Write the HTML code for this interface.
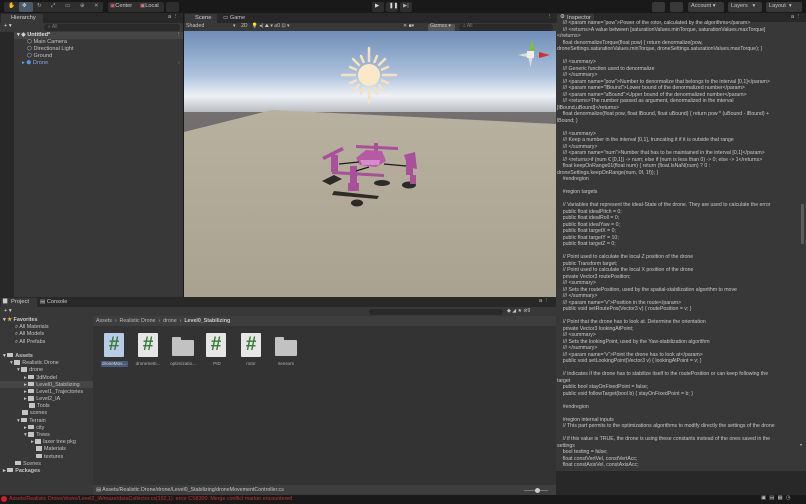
<!DOCTYPE html>
<html><head><meta charset="utf-8"><style>
*{margin:0;padding:0;box-sizing:border-box}
body{width:806px;height:504px;overflow:hidden;background:#191919;font-family:"Liberation Sans",sans-serif;color:#c4c4c4;position:relative}
.a{position:absolute}
.btn{position:absolute;background:#383838;border-radius:2px;height:10px}
.t{font-size:5.6px;white-space:nowrap;position:absolute;line-height:7px}
.tab{position:absolute;background:#383838;height:9px;font-size:5.8px;line-height:9px;padding-left:10px;color:#d0d0d0}
#insp div{height:6.5px;line-height:6.5px;font-size:5.2px;white-space:pre;color:#c8c8c8}
.tree div{height:7.2px;line-height:7.2px;font-size:5.4px;white-space:nowrap;position:relative}
.fold{display:inline-block;width:6px;height:4.5px;background:#c4c4c4;margin-right:2px;vertical-align:-0.5px;border-radius:0.5px}
.file{position:absolute;width:20px;height:24px;background:#e6e6e6;border-radius:1px;color:#3a7a3a;font-size:19px;font-weight:bold;text-align:center;line-height:24px}
.fd{position:absolute;width:22px;height:16px;background:#c2c2c2;border-radius:1px}
.fd:before{content:"";position:absolute;left:0;top:-3px;width:9px;height:4px;background:#c2c2c2;border-radius:1px 1px 0 0}
.lbl{position:absolute;font-size:4.6px;color:#b0b0b0;width:34px;text-align:center;white-space:nowrap;overflow:hidden}
</style></head><body>
<!-- toolbar -->
<div class="btn" style="left:4px;top:2px;width:99px;background:#2e2e2e"></div>
<div class="a" style="left:19px;top:2px;width:14px;height:10px;background:#4a5a6a;border-radius:2px"></div>
<div class="t" style="left:8px;top:3px;color:#aaa">✋</div>
<div class="t" style="left:22px;top:3px;color:#ddd">✥</div>
<div class="t" style="left:37px;top:3px;color:#aaa">↻</div>
<div class="t" style="left:51px;top:3px;color:#aaa">⤢</div>
<div class="t" style="left:65px;top:3px;color:#aaa">▭</div>
<div class="t" style="left:80px;top:3px;color:#aaa">⊕</div>
<div class="t" style="left:94px;top:3px;color:#aaa">✕</div>
<div class="btn" style="left:108px;top:2px;width:56px;background:#2e2e2e"></div>
<div class="t" style="left:110px;top:3px;color:#d06060">▣<span style="color:#ccc">Center</span></div>
<div class="t" style="left:140px;top:3px;color:#d08080">▣<span style="color:#ccc">Local</span></div>
<div class="btn" style="left:166px;top:2px;width:13px;background:#2e2e2e"></div>
<div class="btn" style="left:372px;top:2px;width:12px;background:#2e2e2e"></div>
<div class="t" style="left:375px;top:3px;color:#ddd">▶</div>
<div class="btn" style="left:386px;top:2px;width:12px;background:#2e2e2e"></div>
<div class="t" style="left:389px;top:3px;color:#ddd">❚❚</div>
<div class="btn" style="left:400px;top:2px;width:12px;background:#2e2e2e"></div>
<div class="t" style="left:403px;top:3px;color:#aaa">▶|</div>
<div class="btn" style="left:652px;top:2px;width:13px"></div>
<div class="btn" style="left:670px;top:2px;width:13px"></div>
<div class="btn" style="left:688px;top:2px;width:36px"></div><div class="t" style="left:691px;top:3px">Account ▾</div>
<div class="btn" style="left:728px;top:2px;width:34px"></div><div class="t" style="left:731px;top:3px">Layers &nbsp;&nbsp;▾</div>
<div class="btn" style="left:766px;top:2px;width:36px"></div><div class="t" style="left:769px;top:3px">Layout &nbsp;▾</div>

<!-- hierarchy -->
<div class="a" style="left:0;top:13px;width:183px;height:284px;background:#282828"></div>
<div class="tab" style="left:1px;top:14px;width:42px">Hierarchy</div>
<div class="t" style="left:168px;top:14px">a ⋮</div>
<div class="a" style="left:0;top:23px;width:183px;height:9px;background:#383838"></div>
<div class="t" style="left:4px;top:23px;color:#ddd">+ ▾</div>
<div class="a" style="left:44px;top:24px;width:136px;height:7px;background:#2a2a2a;border-radius:3px"></div>
<div class="t" style="left:48px;top:23.5px;font-size:5px;color:#777">⌕ All</div>
<div class="a" style="left:14px;top:32px;width:169px;height:265px;background:#383838"></div>
<div class="a" style="left:14px;top:32px;width:169px;height:7px;background:#454545"></div>
<div class="t" style="left:17px;top:31.5px;color:#ddd;font-weight:bold">▾ ◈ Untitled*</div>
<div class="t" style="left:176px;top:31.5px">⋮</div>
<div class="t" style="left:27px;top:38.5px">⬡ Main Camera</div>
<div class="t" style="left:27px;top:45.5px">⬡ Directional Light</div>
<div class="t" style="left:27px;top:52.5px">⬡ Ground</div>
<div class="t" style="left:22px;top:59.5px;color:#7ca8e0">▸ <span style="color:#4aa0e0">⬢</span> Drone</div>
<div class="t" style="left:178px;top:59.5px;color:#888">›</div>

<!-- scene tabs -->
<div class="a" style="left:184px;top:13px;width:372px;height:18px;background:#282828"></div>
<div class="tab" style="left:185px;top:14px;width:32px">Scene</div>
<div class="t" style="left:223px;top:15px">▭ Game</div>
<div class="t" style="left:547px;top:14px">⋮</div>
<div class="a" style="left:184px;top:23px;width:372px;height:8px;background:#383838"></div>
<div class="t" style="left:186px;top:23px;font-size:5.3px">Shaded</div>
<div class="t" style="left:233px;top:23px;font-size:5px">▾ &nbsp;&nbsp;&nbsp;2D &nbsp;&nbsp;💡 ◂) ⛰ ▾ ⌀0 ⊡ ▾</div>
<div class="t" style="left:403px;top:23px;font-size:5px">✕ ■▾</div>
<div class="a" style="left:428px;top:23.5px;width:27px;height:7px;background:#555;border-radius:1px"></div>
<div class="t" style="left:430px;top:23px;font-size:5px">Gizmos ▾</div>
<div class="a" style="left:459px;top:23.5px;width:94px;height:7px;background:#2a2a2a;border-radius:3px"></div>
<div class="t" style="left:463px;top:23px;font-size:5px;color:#777">⌕ All</div>

<!-- scene view -->
<svg class="a" style="left:184px;top:31px" width="372" height="266" viewBox="0 0 372 266">
<defs><linearGradient id="sky" x1="0" y1="0" x2="0" y2="1">
<stop offset="0" stop-color="#6f8db8"/><stop offset="0.55" stop-color="#aec3dc"/><stop offset="0.8" stop-color="#eef2f6"/><stop offset="1" stop-color="#b9bcc0"/></linearGradient>
<linearGradient id="gnd" x1="0" y1="0" x2="0" y2="1"><stop offset="0" stop-color="#757070"/><stop offset="1" stop-color="#5f5b59"/></linearGradient>
<linearGradient id="pl" x1="0" y1="0" x2="0" y2="1"><stop offset="0" stop-color="#b9b19f"/><stop offset="1" stop-color="#a9a290"/></linearGradient></defs>
<rect width="372" height="81" fill="url(#sky)"/>
<rect y="81" width="372" height="185" fill="url(#gnd)"/>
<polygon points="0,101 88,79 372,93 372,266 0,266" fill="url(#pl)"/>
<g stroke="#f4e2c0" stroke-width="2.5" stroke-linecap="round" transform="translate(185,44)">
<line x1="0" y1="-14" x2="0" y2="-27"/><line x1="0" y1="14" x2="0" y2="27"/><line x1="-14" y1="0" x2="-27" y2="0"/><line x1="14" y1="0" x2="27" y2="0"/>
<line x1="10" y1="-10" x2="16" y2="-16"/><line x1="-10" y1="-10" x2="-16" y2="-16"/><line x1="10" y1="10" x2="16" y2="16"/><line x1="-10" y1="10" x2="-16" y2="16"/>
<line x1="5.5" y1="-13" x2="8" y2="-19"/><line x1="-5.5" y1="-13" x2="-8" y2="-19"/><line x1="5.5" y1="13" x2="8" y2="19"/><line x1="-5.5" y1="13" x2="-8" y2="19"/>
<line x1="13" y1="-5.5" x2="19" y2="-8"/><line x1="-13" y1="-5.5" x2="-19" y2="-8"/><line x1="13" y1="5.5" x2="19" y2="8"/><line x1="-13" y1="5.5" x2="-19" y2="8"/>
</g>
<circle cx="185" cy="44" r="11" fill="#fbe8c6"/>
<!-- gizmo -->
<polygon points="348,9 345,20 351,20" fill="#7ec03a"/>
<polygon points="366,24 355,21 355,27" fill="#d03030"/>
<rect x="343" y="20" width="7" height="7" fill="#eee"/>
<polygon points="334,24 343,22 343,26" fill="#ddd"/><polygon points="346.5,36 344.5,27 348.5,27" fill="#ddd"/>
<!-- drone shadow -->
<g fill="#151515" opacity="0.85">
<polygon points="138,150 150,144 158,148 146,154"/><polygon points="150,160 195,165 193,168 148,164"/>
<ellipse cx="198" cy="152" rx="8" ry="3"/><ellipse cx="173" cy="172" rx="6" ry="3.5"/><ellipse cx="225" cy="154" rx="7" ry="3.5"/>
</g>
<g fill="#a8509a">
<polygon points="138,126 158,116 160,119 140,129"/>
<polygon points="172,114 214,116 214,119 172,117"/>
<rect x="147" y="124" width="7" height="17"/><rect x="190" y="112" width="4" height="12"/>
<polygon points="172,127 182,119 198,120 202,130 192,136 176,134" fill="#b65aa2"/>
<polygon points="176,129 196,129 195,134 178,134" fill="#d88ccc"/>
<rect x="166" y="135" width="7" height="18"/><polygon points="148,140 200,143 200,146 148,143"/>
<rect x="164" y="152" width="11" height="8"/>
<rect x="222" y="127" width="7" height="17"/><polygon points="220,124 231,121 233,138 224,136"/>
<rect x="226" y="144" width="6" height="9"/>
</g>
<g stroke="#1a1a1a" stroke-width="1.2"><line x1="155" y1="133" x2="175" y2="131"/><line x1="200" y1="133" x2="222" y2="135"/><line x1="185" y1="136" x2="172" y2="140"/></g>
</svg>

<!-- inspector -->
<div class="a" style="left:556px;top:13px;width:250px;height:491px;background:#282828"></div>
<div class="tab" style="left:557px;top:14px;width:37px">Inspector</div>
<div class="t" style="left:560px;top:14px;color:#ddd">⚙</div>
<div class="t" style="left:791px;top:14px">a ⋮</div>
<div class="a" style="left:556px;top:22px;width:250px;height:449px;background:#383838"></div>
<div class="a" style="left:801px;top:204px;width:3px;height:40px;background:#5a5a5a"></div>
<div class="t" style="left:800px;top:441px;font-size:4px">▾</div>
<div id="insp" class="a" style="left:557px;top:20px;width:244px;overflow:hidden;height:451px">
<div>    /// &lt;param name="pow"&gt;Power of the rotor, calculated by the algorithms&lt;/param&gt;</div>
<div>    /// &lt;returns&gt;A value between [saturationValues.minTorque, saturationValues.maxTorque]</div>
<div>&lt;/returns&gt;</div>
<div>    float denormalizeTorque(float pow) { return denormalize(pow,</div>
<div>droneSettings.saturationValues.minTorque, droneSettings.saturationValues.maxTorque); }</div>
<div> </div>
<div>    /// &lt;summary&gt;</div>
<div>    /// Generic function used to denormalize</div>
<div>    /// &lt;/summary&gt;</div>
<div>    /// &lt;param name="pow"&gt;Number to denormalize that belongs to the interval [0,1]&lt;/param&gt;</div>
<div>    /// &lt;param name="lBound"&gt;Lower bound of the denormalized number&lt;/param&gt;</div>
<div>    /// &lt;param name="uBound"&gt;Upper bound of the denormalized number&lt;/param&gt;</div>
<div>    /// &lt;returns&gt;The number passed as argument, denormalized in the interval</div>
<div>[lBound,uBound]&lt;/returns&gt;</div>
<div>    float denormalize(float pow, float lBound, float uBound) { return pow * (uBound - lBound) +</div>
<div>lBound; }</div>
<div> </div>
<div>    /// &lt;summary&gt;</div>
<div>    /// Keep a number in the interval [0,1], truncating it if it is outside that range</div>
<div>    /// &lt;/summary&gt;</div>
<div>    /// &lt;param name="num"&gt;Number that has to be maintained in the interval [0,1]&lt;/param&gt;</div>
<div>    /// &lt;returns&gt;if (num € [0,1]) -&gt; num; else if (num is less than 0) -&gt; 0; else -&gt; 1&lt;/returns&gt;</div>
<div>    float keepOnRange01(float num) { return (float.IsNaN(num) ? 0 :</div>
<div>droneSettings.keepOnRange(num, 0f, 1f)); }</div>
<div>    #endregion</div>
<div> </div>
<div>    #region targets</div>
<div> </div>
<div>    // Variables that represent the ideal-State of the drone. They are used to calculate the error</div>
<div>    public float idealPitch = 0;</div>
<div>    public float idealRoll = 0;</div>
<div>    public float idealYaw = 0;</div>
<div>    public float targetX = 0;</div>
<div>    public float targetY = 10;</div>
<div>    public float targetZ = 0;</div>
<div> </div>
<div>    // Point used to calculate the local Z position of the drone</div>
<div>    public Transform target;</div>
<div>    // Point used to calculate the local X position of the drone</div>
<div>    private Vector3 routePosition;</div>
<div>    /// &lt;summary&gt;</div>
<div>    /// Sets the routePosition, used by the spatial-stabilization algorithm to move</div>
<div>    /// &lt;/summary&gt;</div>
<div>    /// &lt;param name="v"&gt;Position in the route&lt;/param&gt;</div>
<div>    public void setRoutePos(Vector3 v) { routePosition = v; }</div>
<div> </div>
<div>    // Point that the drone has to look at. Determine the orientation</div>
<div>    private Vector3 lookingAtPoint;</div>
<div>    /// &lt;summary&gt;</div>
<div>    /// Sets the lookingPoint, used by the Yaw-stabilization algorithm</div>
<div>    /// &lt;/summary&gt;</div>
<div>    /// &lt;param name="v"&gt;Point the drone has to look at&lt;/param&gt;</div>
<div>    public void setLookingPoint(Vector3 v) { lookingAtPoint = v; }</div>
<div> </div>
<div>    // Indicates if the drone has to stabilize itself to the routePosition or can keep following the</div>
<div>target</div>
<div>    public bool stayOnFixedPoint = false;</div>
<div>    public void followTarget(bool b) { stayOnFixedPoint = b; }</div>
<div> </div>
<div>    #endregion</div>
<div> </div>
<div>    #region internal inputs</div>
<div>    // This part permits to the optimizations algorithms to modify directly the settings of the drone</div>
<div> </div>
<div>    // if this value is TRUE, the drone is using these constants instead of the ones saved in the</div>
<div>settings</div>
<div>    bool testing = false;</div>
<div>    float constVertVel, constVertAcc;</div>
<div>    float constAxisVel, constAxisAcc;</div>
</div>

<!-- project panel -->
<div class="a" style="left:0;top:297px;width:556px;height:198px;background:#282828"></div>
<div class="tab" style="left:1px;top:298px;width:36px">Project</div>
<div class="t" style="left:3px;top:298px;color:#ccc">▆</div>
<div class="t" style="left:40px;top:299px;color:#ccc">▤ Console</div>
<div class="t" style="left:539px;top:298px">a ⋮</div>
<div class="a" style="left:0;top:307px;width:556px;height:9px;background:#383838"></div>
<div class="t" style="left:4px;top:308px;color:#ddd">+ ▾</div>
<div class="a" style="left:369px;top:308.5px;width:134px;height:6px;background:#2a2a2a;border-radius:3px"></div>
<div class="t" style="left:507px;top:308px;font-size:5px">◆ ◢ ★ ⊘9</div>
<div class="a" style="left:0;top:316px;width:93px;height:179px;background:#383838"></div>
<div class="a" style="left:93px;top:316px;width:463px;height:10px;background:#3e3e3e"></div>
<div class="t" style="left:96px;top:317.5px;font-size:5.3px;color:#b8b8b8">Assets &nbsp;› &nbsp;Realistic Drone &nbsp;› &nbsp;drone &nbsp;› &nbsp;<b style="color:#ccc">Level0_Stabilizing</b></div>
<div class="a" style="left:93px;top:326px;width:463px;height:159px;background:#333333"></div>
<div class="a" style="left:93px;top:485px;width:463px;height:10px;background:#3e3e3e"></div>
<div class="t" style="left:96px;top:486.5px;font-size:5.3px">▤ Assets/Realistic Drone/drone/Level0_Stabilizing/droneMovementController.cs</div>
<div class="a" style="left:524px;top:489.5px;width:24px;height:1px;background:#777"></div>
<div class="a" style="left:535px;top:487.5px;width:5px;height:5px;background:#ccc;border-radius:50%"></div>
<div class="file" style="left:104px;top:333px;background:#b8cce8">#</div>
<div class="file" style="left:138px;top:333px">#</div>
<div class="fd" style="left:172px;top:340px"></div>
<div class="file" style="left:206px;top:333px">#</div>
<div class="file" style="left:241px;top:333px">#</div>
<div class="fd" style="left:275px;top:340px"></div>
<div class="a" style="left:101px;top:361px;width:27px;height:6px;background:#4a5a78;border-radius:1px"></div>
<div class="lbl" style="left:97px;top:361px;color:#ddd">droneMov...</div>
<div class="lbl" style="left:131px;top:361px">droneSetti...</div>
<div class="lbl" style="left:166px;top:361px">optimizatio...</div>
<div class="lbl" style="left:200px;top:361px">PID</div>
<div class="lbl" style="left:234px;top:361px">rotor</div>
<div class="lbl" style="left:269px;top:361px">sensors</div>
<div class="a" style="left:0;top:381px;width:93px;height:7px;background:#464646"></div>
<div class="tree a" style="left:3px;top:317px;width:92px">
<div style="font-weight:bold;color:#ccc">▾ <span style="color:#e0b040">★</span> Favorites</div>
<div style="padding-left:12px">⌕ All Materials</div>
<div style="padding-left:12px">⌕ All Models</div>
<div style="padding-left:12px">⌕ All Prefabs</div>
<div> </div>
<div style="font-weight:bold">▾ <span class="fold"></span>Assets</div>
<div style="padding-left:7px">▾ <span class="fold"></span>Realistic Drone</div>
<div style="padding-left:14px">▾ <span class="fold"></span>drone</div>
<div style="padding-left:21px">▸ <span class="fold"></span>3dModel</div>
<div style="padding-left:21px">▸ <span class="fold"></span>Level0_Stabilizing</div>
<div style="padding-left:21px">▸ <span class="fold"></span>Level1_Trajectories</div>
<div style="padding-left:21px">▸ <span class="fold"></span>Level2_IA</div>
<div style="padding-left:26px"><span class="fold"></span>Tools</div>
<div style="padding-left:19px"><span class="fold"></span>scenes</div>
<div style="padding-left:14px">▾ <span class="fold"></span>Terrain</div>
<div style="padding-left:21px">▸ <span class="fold"></span>city</div>
<div style="padding-left:21px">▾ <span class="fold"></span>Trees</div>
<div style="padding-left:28px">▸ <span class="fold"></span>laxer tree pkg</div>
<div style="padding-left:33px"><span class="fold"></span>Materials</div>
<div style="padding-left:33px"><span class="fold"></span>textures</div>
<div style="padding-left:12px"><span class="fold"></span>Scenes</div>
<div style="font-weight:bold">▸ <span class="fold"></span>Packages</div>
</div>

<!-- status bar -->
<div class="a" style="left:0;top:495px;width:806px;height:9px;background:#191919"></div>
<div class="a" style="left:1px;top:496px;width:6px;height:6px;background:#d02020;border-radius:50%"></div>
<div class="t" style="left:9px;top:495.5px;font-size:5.3px;color:#c83030">Assets/Realistic Drone/drone/Level2_IA/maze/dataCollector.cs(192,1): error CS8300: Merge conflict marker encountered</div>
<div class="t" style="left:761px;top:495px;font-size:5.5px;color:#bbb">▣ &nbsp;▤ &nbsp;▦ &nbsp;◷</div>
</body></html>
